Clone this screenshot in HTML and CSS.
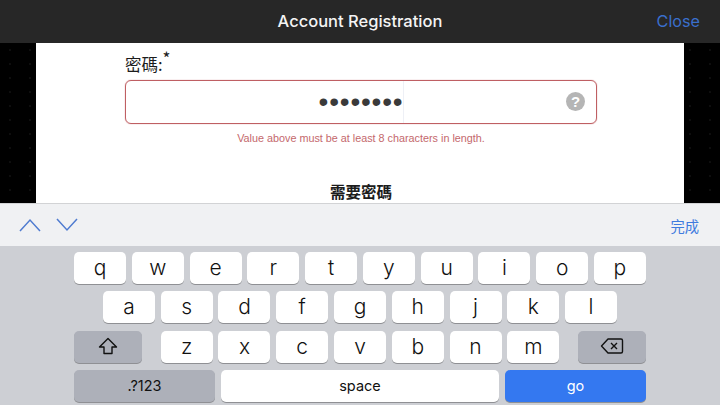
FILE: index.html
```html
<!DOCTYPE html>
<html>
  <head>
    <title>Account Registration</title>
    <link rel="stylesheet" href="styles.css">
  </head>
  <body>
    <header class="topbar">
      <h1>Account Registration</h1>
      <a class="close">Close</a>
    </header>

    <main class="stage">
      <form class="sheet">
        <label class="field-label">密碼:<sup>*</sup></label>
        <div class="password-box">
          <span class="dots">••••••••</span>
          <span class="caret"></span>
          <span class="help">?</span>
        </div>
        <p class="error">Value above must be at least 8 characters in length.</p>
        <h2>需要密碼</h2>
      </form>
    </main>

    <div class="toolbar">
      <div class="arrows">
        <svg width="22" height="14" viewBox="0 0 22 14"><path d="M1 13 L11 2 L21 13" /></svg>
        <svg width="22" height="14" viewBox="0 0 22 14"><path d="M1 1 L11 12 L21 1" /></svg>
      </div>
      <a class="done">完成</a>
    </div>

    <div class="keyboard">
      <div class="row">
        <div class="key">q</div><div class="key">w</div><div class="key">e</div><div class="key">r</div><div class="key">t</div>
        <div class="key">y</div><div class="key">u</div><div class="key">i</div><div class="key">o</div><div class="key">p</div>
      </div>
      <div class="row">
        <div class="key">a</div><div class="key">s</div><div class="key">d</div><div class="key">f</div><div class="key">g</div>
        <div class="key">h</div><div class="key">j</div><div class="key">k</div><div class="key">l</div>
      </div>
      <div class="row row-three">
        <div class="key key-dark key-side">
          <svg width="20" height="18" viewBox="0 0 20 18"><path d="M10 1.5 L18.5 10 H14 V16.5 H6 V10 H1.5 Z" /></svg>
        </div>
        <div class="letters">
          <div class="key">z</div><div class="key">x</div><div class="key">c</div><div class="key">v</div>
          <div class="key">b</div><div class="key">n</div><div class="key">m</div>
        </div>
        <div class="key key-dark key-side">
          <svg width="24" height="18" viewBox="0 0 24 18"><path d="M8 2 H21 Q22.5 2 22.5 3.5 V14.5 Q22.5 16 21 16 H8 L1.5 9 Z" /><path d="M11 6 L17 12 M17 6 L11 12" /></svg>
        </div>
      </div>
      <div class="row row-bottom">
        <div class="key key-dark key-wide key-small">.?123</div>
        <div class="key key-space key-small">space</div>
        <div class="key key-go key-wide key-small">go</div>
      </div>
    </div>
  </body>
</html>
```

FILE: styles.css
```css
/* page frame */
html,
body {
  width: 720px;
  height: 405px;
  margin: 0;
  overflow: hidden;
}

body {
  display: flex;
  flex-direction: column;
  font-family: Inter, "Liberation Sans", "Noto Sans CJK TC", sans-serif;
  background-color: #000000;
}

/* top bar */
.topbar {
  position: relative;
  height: 43px;
  flex: none;
  display: flex;
  align-items: center;
  justify-content: center;
  padding-bottom: 2px;
  box-sizing: border-box;
  background-color: #272727;
}

.topbar h1 {
  margin: 0;
  font-size: 16.5px;
  font-weight: 500;
  color: #f4f4f4;
}

.close {
  position: absolute;
  right: 20px;
  top: 11px;
  font-size: 16.2px;
  color: #3a6fcc;
}

/* white sheet on black */
.stage {
  flex: none;
  height: 160px;
  padding: 0 36px;
  background-color: #000000;
  background-image: radial-gradient(circle, #0e0e0e 0.7px, transparent 1.2px);
  background-size: 20px 14px;
}

.sheet {
  height: 160px;
  padding: 0 87px 0 89px;
  overflow: hidden;
  background-color: #ffffff;
  color: #1c1c1c;
}

.field-label {
  display: block;
  height: 37px;
  padding-top: 10px;
  box-sizing: border-box;
  font-size: 16.5px;
  line-height: 22px;
  font-family: "Noto Sans CJK TC", sans-serif;
}

.field-label sup {
  font-size: 17px;
  line-height: 0;
}

.password-box {
  position: relative;
  height: 44px;
  box-sizing: border-box;
  display: flex;
  align-items: center;
  justify-content: center;
  border: 1px solid #bf5f63;
  border-radius: 6px;
  box-shadow: 0 0 1px #bf5f63;
}

.dots {
  font-family: "Liberation Sans", sans-serif;
  font-size: 28px;
  line-height: 28px;
  letter-spacing: 0.8px;
  color: #3a3a3a;
}

.caret {
  position: absolute;
  left: 277px;
  top: 0;
  bottom: 0;
  width: 1px;
  background-color: #eef0f6;
}

.help {
  position: absolute;
  right: 11px;
  top: 11px;
  width: 19px;
  height: 19px;
  border-radius: 50%;
  background-color: #b5b5b5;
  color: #ffffff;
  font-family: "Liberation Sans", sans-serif;
  font-size: 15px;
  font-weight: 700;
  line-height: 19px;
  text-align: center;
}

.error {
  margin: 7px 0 0;
  font-family: "Liberation Sans", sans-serif;
  font-size: 10.8px;
  line-height: 14px;
  text-align: center;
  color: #c4686c;
}

.sheet h2 {
  margin: 35px 0 0;
  font-family: "Noto Sans CJK TC", sans-serif;
  font-size: 15.5px;
  font-weight: 700;
  line-height: 22px;
  text-align: center;
  color: #1c1c1c;
}

/* toolbar above the keyboard */
.toolbar {
  flex: none;
  height: 43px;
  box-sizing: border-box;
  display: flex;
  align-items: center;
  justify-content: space-between;
  padding: 0 21px 0 19px;
  border-top: 1px solid #d2d3d5;
  background-color: #f0f1f3;
}

.arrows {
  display: flex;
  gap: 15px;
}

.arrows path {
  fill: none;
  stroke: #4f7bd0;
  stroke-width: 1.5;
}

.done {
  font-family: "Noto Sans CJK TC", sans-serif;
  font-size: 14.3px;
  color: #3f7bde;
}

/* keyboard */
.keyboard {
  flex: 1;
  display: flex;
  flex-direction: column;
  gap: 7.3px;
  padding-top: 6px;
  background-color: #cdcfd4;
}

.row {
  display: flex;
  justify-content: center;
  gap: 5.78px;
}

.row-three {
  width: 572px;
  margin: 0 auto;
  justify-content: space-between;
}

.letters {
  display: flex;
  gap: 5.78px;
}

.row-bottom {
  width: 572px;
  margin: 0 auto;
  gap: 6px;
}

.key {
  width: 52px;
  height: 32px;
  display: flex;
  align-items: center;
  justify-content: center;
  padding-bottom: 1px;
  box-sizing: border-box;
  border-radius: 5px;
  background-color: #ffffff;
  box-shadow: 0 1px 0 #8f9094;
  color: #111111;
  font-size: 21px;
  font-weight: 300;
}

.key-small {
  font-size: 14.5px;
  font-weight: 400;
}

.key-dark {
  background-color: #adb0b9;
}

.key-side {
  width: 68px;
}

.key-wide {
  width: 141px;
}

.key-space {
  flex: 1;
}

.key-go {
  background-color: #3478f0;
  color: #ffffff;
}

.key-side path {
  fill: none;
  stroke: #111111;
  stroke-width: 1.4;
  stroke-linejoin: round;
}
```
